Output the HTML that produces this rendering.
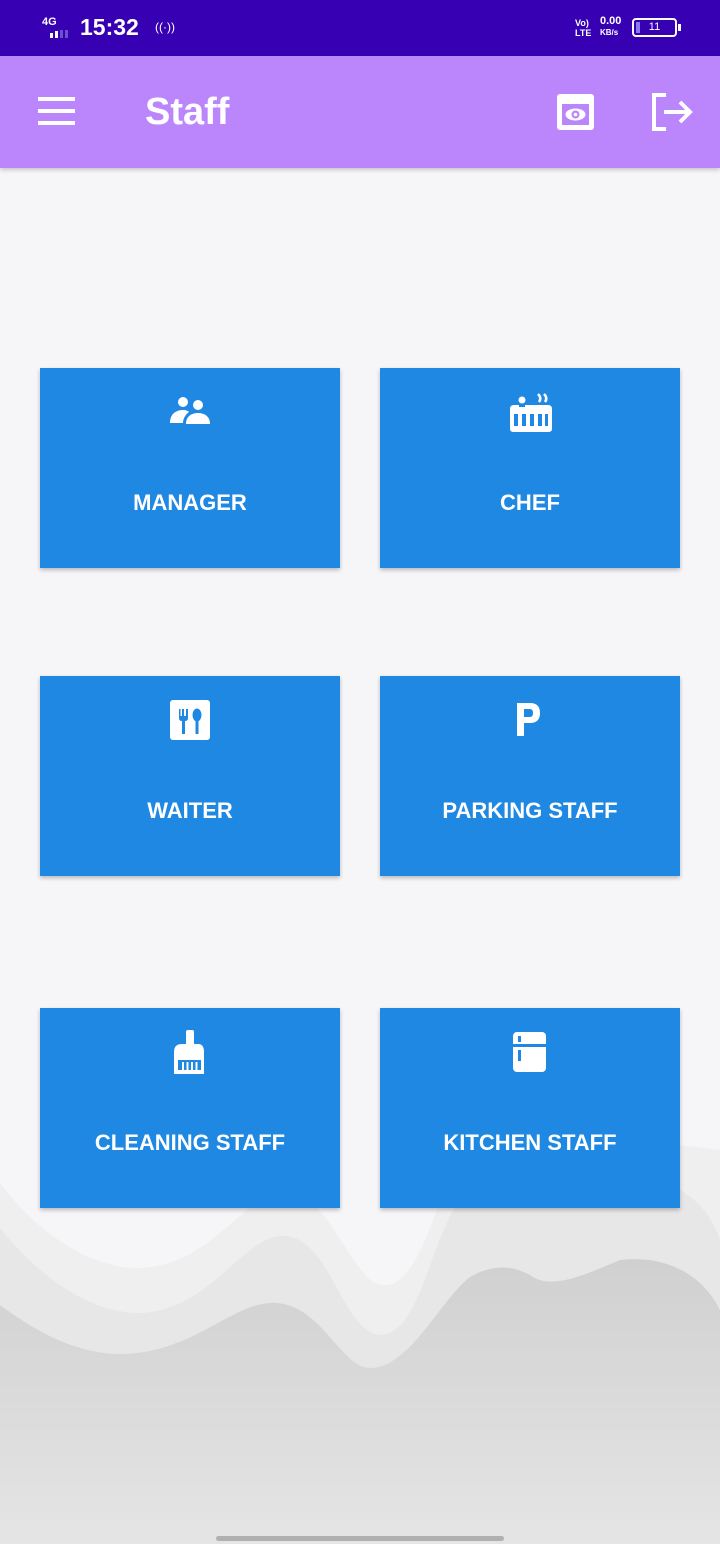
<!DOCTYPE html>
<html><head><meta charset="utf-8"><style>
*{margin:0;padding:0;box-sizing:border-box}
body{width:720px;height:1544px;overflow:hidden;background:#f6f6f8;font-family:"Liberation Sans",sans-serif;position:relative}
.sb{position:absolute;top:0;left:0;width:720px;height:56px;background:#3700b3;color:#fff}
.hd{position:absolute;top:56px;left:0;width:720px;height:112px;background:#bb86fc;box-shadow:0 2px 4px rgba(0,0,0,.2)}
.card{position:absolute;width:300px;height:200px;background:#1f88e3;box-shadow:0 2px 4px rgba(0,0,0,.25);color:#fff}
.card .t{position:absolute;top:122px;left:0;width:100%;text-align:center;font-size:22px;font-weight:bold;letter-spacing:0}
.card svg{position:absolute;left:130px;top:24px}
</style></head><body>
<svg style="position:absolute;left:0;top:0" width="720" height="1544">
<path d="M0 1183 C50 1250 110 1270 140 1268 C210 1265 240 1200 280 1192 C320 1185 340 1250 370 1280 C400 1300 420 1260 440 1200 C470 1120 520 1100 560 1130 L720 1150 L720 1544 L0 1544Z" fill="#efefef"/>
<path d="M0 1228 C50 1290 100 1313 140 1313 C210 1310 240 1240 280 1236 C330 1232 340 1330 380 1335 C420 1335 430 1240 460 1200 C500 1150 560 1200 600 1180 C640 1170 700 1180 720 1240 L720 1544 L0 1544Z" fill="#e7e7e7"/>
<linearGradient id="g" x1="0" y1="0" x2="0" y2="1"><stop offset="0" stop-color="#d0d0d0"/><stop offset="1" stop-color="#e5e5e5"/></linearGradient>
<path d="M0 1305 C40 1335 80 1354 120 1354 C190 1354 230 1305 270 1303 C320 1300 340 1368 370 1368 C410 1368 440 1300 470 1277 C500 1260 520 1270 530 1275 C550 1290 580 1277 620 1260 C660 1255 700 1270 720 1310 L720 1544 L0 1544Z" fill="url(#g)"/>
<rect x="216" y="1536" width="288" height="5" rx="2.5" fill="#b0b0b0"/>
</svg>
<div class="sb">
<div style="position:absolute;left:42px;top:16px;font-size:11px;font-weight:bold">4G</div>
<div style="position:absolute;left:44px;top:30px;width:30px;height:8px"><span style="position:absolute;left:6px;top:3px;width:3px;height:5px;background:#fff"></span><span style="position:absolute;left:11px;top:1px;width:3px;height:7px;background:#fff"></span><span style="position:absolute;left:16px;top:0;width:3px;height:8px;background:#6a4fd0"></span><span style="position:absolute;left:21px;top:0;width:3px;height:8px;background:#6a4fd0"></span></div>
<div style="position:absolute;left:80px;top:14px;font-size:23px;font-weight:bold">15:32</div>
<div style="position:absolute;left:155px;top:20px;font-size:12px">((·))</div>
<div style="position:absolute;left:575px;top:18px;font-size:9px;font-weight:bold;line-height:10px">Vo)<br>LTE</div>
<div style="position:absolute;left:600px;top:16px;font-size:11px;font-weight:bold;line-height:11px">0.00<br><span style="font-size:8px">KB/s</span></div>
<div style="position:absolute;left:632px;top:18px;width:45px;height:19px;border:2px solid #fff;border-radius:4px;font-size:11px;text-align:center;line-height:15px">11<span style="position:absolute;left:2px;top:2px;width:4px;height:11px;background:#8a7af0"></span></div>
<div style="position:absolute;left:678px;top:24px;width:3px;height:7px;background:#fff"></div>
</div>
<div class="hd">
<div style="position:absolute;left:38px;top:41px;width:37px;height:4px;background:#fff;box-shadow:0 12px 0 #fff,0 24px 0 #fff"></div>
<div style="position:absolute;left:145px;top:35px;font-size:38px;color:#fff;font-weight:bold">Staff</div>
<svg style="position:absolute;left:557px;top:38px" width="38" height="36"><rect x="0" y="0" width="37" height="36" rx="3" fill="#fff"/><rect x="5" y="10" width="27" height="21" fill="#bb86fc"/><ellipse cx="18.5" cy="20.5" rx="10" ry="6" fill="#fff"/><circle cx="18.5" cy="20.5" r="4" fill="#bb86fc"/><circle cx="18.5" cy="20.5" r="1.8" fill="#fff"/></svg>
<svg style="position:absolute;left:650px;top:36px" width="44" height="40" fill="none" stroke="#fff" stroke-width="4"><path d="M16 3H4V37H16"/><path d="M14 20H40M30 10L40 20L30 30"/></svg>
</div>
<div class="card" style="left:40px;top:368px"><svg style="top:29px" width="40" height="32" viewBox="0 0 40 32" fill="#fff"><circle cx="13" cy="5" r="5"/><circle cx="28" cy="8" r="5"/><path d="M0 26C0 17 6 13 13 13C16 13 18 14 19 15C15 18 13 22 13 26Z"/><path d="M16 27C16 19 22 16 28 16C34 16 40 19 40 27Z"/></svg><div class="t">MANAGER</div></div>
<div class="card" style="left:380px;top:368px"><svg style="top:25px" width="44" height="40" viewBox="0 0 44 40" fill="#fff"><circle cx="12" cy="7" r="3.5"/><path d="M28 1q4 4 1 8M34 1q4 4 1 8" stroke="#fff" stroke-width="2.5" fill="none"/><path d="M0 16Q0 12 4 12H9V14H15V12H38Q42 12 42 16V36Q42 39 38 39H4Q0 39 0 36ZM4 21V33H8V21ZM12 21V33H16V21ZM20 21V33H24V21ZM28 21V33H32V21ZM35 21V33H38V21Z" fill-rule="evenodd"/></svg><div class="t">CHEF</div></div>
<div class="card" style="left:40px;top:676px"><svg width="40" height="40" viewBox="0 0 40 40"><rect width="40" height="40" rx="3" fill="#fff"/><path d="M9 9V18Q9 21 12 21V34H15V21Q18 21 18 18V9H16V16H14V9H12V16H10.5V9Z" fill="#1f88e3"/><ellipse cx="27" cy="15" rx="4.5" ry="6.5" fill="#1f88e3"/><rect x="25.5" y="18" width="3" height="16" fill="#1f88e3"/></svg><div class="t">WAITER</div></div>
<div class="card" style="left:380px;top:676px"><svg width="40" height="40" viewBox="0 0 40 40"><path d="M7 3H20Q30 3 30 13Q30 23 20 23H14V36H7ZM14 9V17H20Q23 17 23 13Q23 9 20 9Z" fill="#fff" fill-rule="evenodd"/></svg><div class="t">PARKING STAFF</div></div>
<div class="card" style="left:40px;top:1008px"><svg style="top:20px" width="40" height="46" viewBox="0 0 40 46"><path d="M16 4Q16 2 18 2H22Q24 2 24 4V16H28Q34 16 34 24V46H4V24Q4 16 12 16H16Z" fill="#fff"/><path d="M8 32H31V42H8Z" fill="#1f88e3"/><path d="M13 34V42M17.5 34V42M22 34V42M26.5 34V42" stroke="#fff" stroke-width="2"/></svg><div class="t">CLEANING STAFF</div></div>
<div class="card" style="left:380px;top:1008px"><svg style="top:22px" width="40" height="46" viewBox="0 0 40 46"><rect x="3" y="2" width="33" height="40" rx="4" fill="#fff"/><rect x="3" y="14" width="33" height="3" fill="#1f88e3"/><rect x="8" y="6" width="3" height="6" fill="#1f88e3"/><rect x="8" y="20" width="3" height="11" fill="#1f88e3"/></svg><div class="t">KITCHEN STAFF</div></div>
</body></html>
